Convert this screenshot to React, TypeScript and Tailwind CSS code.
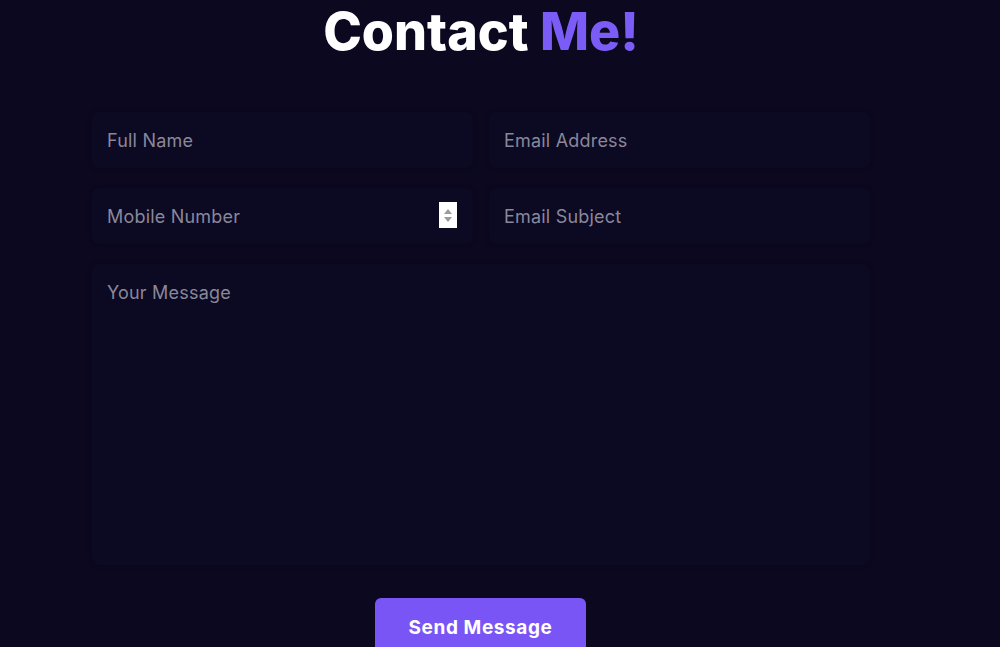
import { useState } from 'react'

const font = { fontFamily: 'Inter, "Open Sans", sans-serif' }

function Field({ placeholder, spinner }: { placeholder: string; spinner?: boolean }) {
  const [value, setValue] = useState('')

  return (
    <div className="relative">
      <input
        value={value}
        onChange={e => setValue(e.target.value)}
        placeholder={placeholder}
        className="w-full h-[56px] pl-[15px] pr-[14px] rounded-md bg-[#0c0923] text-[18px] tracking-[0.2px] text-[#c9c6d6] placeholder:text-[#8a879a] outline-none shadow-[0_0_4px_rgba(0,0,0,0.25)]"
      />
      {spinner && (
        <div className="absolute right-[16px] top-[14px] w-[18px] h-[26px] bg-white flex flex-col items-center justify-center gap-[3px]">
          <span className="block w-0 h-0 border-l-[4px] border-r-[4px] border-b-[5px] border-l-transparent border-r-transparent border-b-[#9a9a9a]" />
          <span className="block w-0 h-0 border-l-[4px] border-r-[4px] border-t-[5px] border-l-transparent border-r-transparent border-t-[#9a9a9a]" />
        </div>
      )}
    </div>
  )
}

export default function App() {
  const [message, setMessage] = useState('')

  return (
    <div className="w-[1000px] h-[647px] overflow-hidden bg-[#0b0820]" style={font}>
      <div className="w-[778px] ml-[92px]">
        <h2 className="text-center text-[52px] font-extrabold leading-none pt-[6px] text-white">
          Contact <span className="text-[#7c5cf6]">Me!</span>
        </h2>

        <form className="mt-[54px]" onSubmit={e => e.preventDefault()}>
          <div className="grid grid-cols-2 gap-x-[16px] gap-y-[20px]">
            <Field placeholder="Full Name" />
            <Field placeholder="Email Address" />
            <Field placeholder="Mobile Number" spinner />
            <Field placeholder="Email Subject" />
          </div>

          {/* Mensagem */}
          <textarea
            value={message}
            onChange={e => setMessage(e.target.value)}
            placeholder="Your Message"
            className="block w-full h-[301px] mt-[20px] pl-[15px] pr-[14px] pt-[15px] pb-[14px] rounded-md bg-[#0c0923] text-[18px] tracking-[0.2px] text-[#c9c6d6] placeholder:text-[#8a879a] outline-none resize-none shadow-[0_0_4px_rgba(0,0,0,0.25)]"
          />

          <div className="flex justify-center mt-[33px]">
            <button
              type="submit"
              className="w-[211px] h-[56px] pt-[4px] rounded-md bg-[#7a55f5] text-white text-[19px] font-bold tracking-[0.6px] -ml-[1px]"
            >
              Send Message
            </button>
          </div>
        </form>
      </div>
    </div>
  )
}
